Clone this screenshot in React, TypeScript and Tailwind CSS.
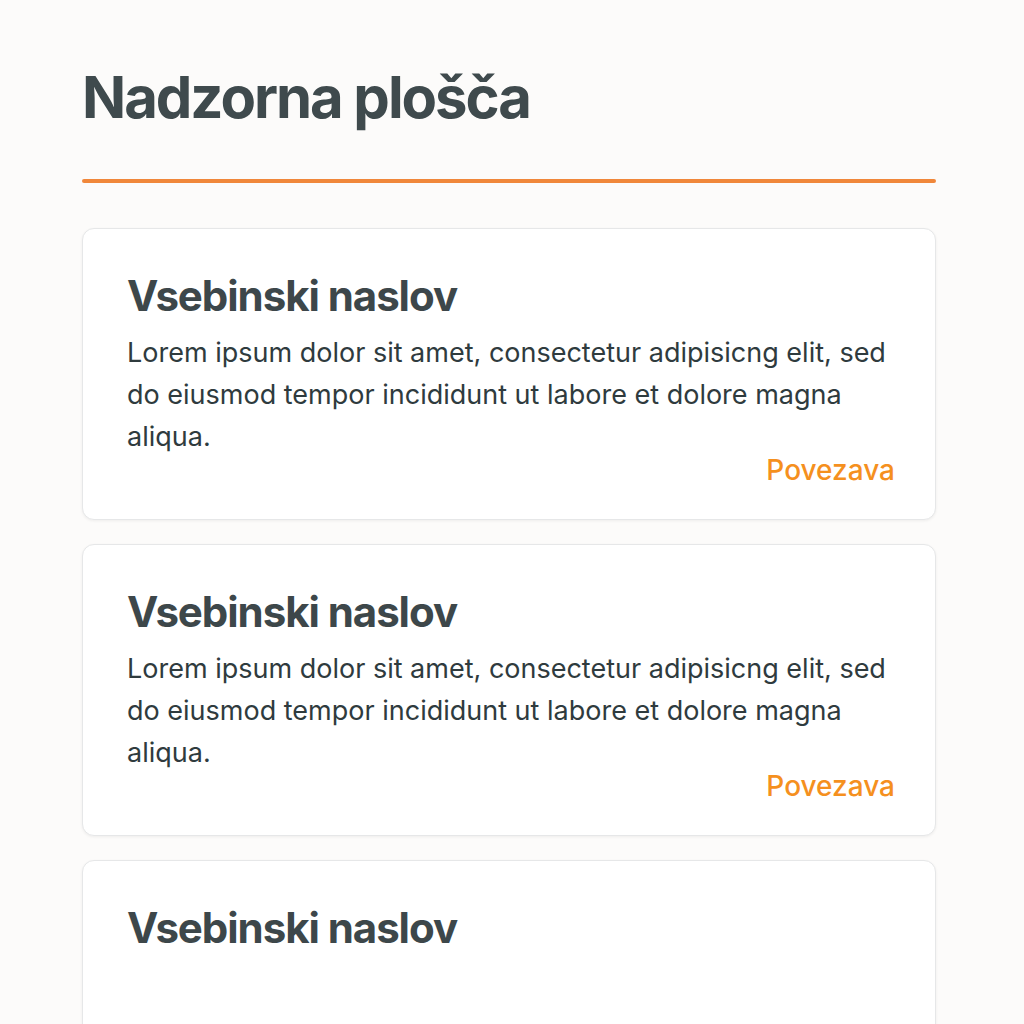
export default function App() {
  const cards = [0, 1];
  return (
    <div className="min-h-screen bg-[#fcfbfa] pt-[62px]" style={{ fontFamily: "Inter, 'Noto Sans', sans-serif" }}>
      <div className="ml-[82px] w-[854px]">
        <h1 className="text-[58px] leading-[70px] font-bold tracking-[-0.035em] text-[#3f4a4d]">Nadzorna plošča</h1>
        <div className="mt-[47px] h-[4px] rounded-full bg-[#f0873a]" />
        <div className="mt-[45px] flex flex-col gap-[24px]">
          {cards.map((i) => (
            <div key={i} className="rounded-[12px] border border-[#e6e7e8] bg-white pl-[44px] pr-[40px] pt-[43px] pb-[41px] shadow-[0_1px_3px_rgba(0,0,0,0.06)]">
              <h2 className="text-[42px] leading-[48px] font-bold tracking-[-0.025em] text-[#3d474a]">Vsebinski naslov</h2>
              <p className="mt-[12px] text-[27px] leading-[42px] text-[#2f3b3e]">
                Lorem ipsum dolor sit amet, consectetur adipisicng elit, sed do eiusmod tempor incididunt ut labore et dolore magna aliqua.
              </p>
              <div className="mt-[4px] flex justify-end">
                <a className="text-[28px] leading-[16px] font-medium text-[#f5901e]">Povezava</a>
              </div>
            </div>
          ))}
          <div className="h-[200px] rounded-[12px] border border-[#e6e7e8] bg-white pl-[44px] pt-[43px] shadow-[0_1px_3px_rgba(0,0,0,0.06)]">
            <h2 className="text-[42px] leading-[48px] font-bold tracking-[-0.025em] text-[#3d474a]">Vsebinski naslov</h2>
          </div>
        </div>
      </div>
    </div>
  );
}
